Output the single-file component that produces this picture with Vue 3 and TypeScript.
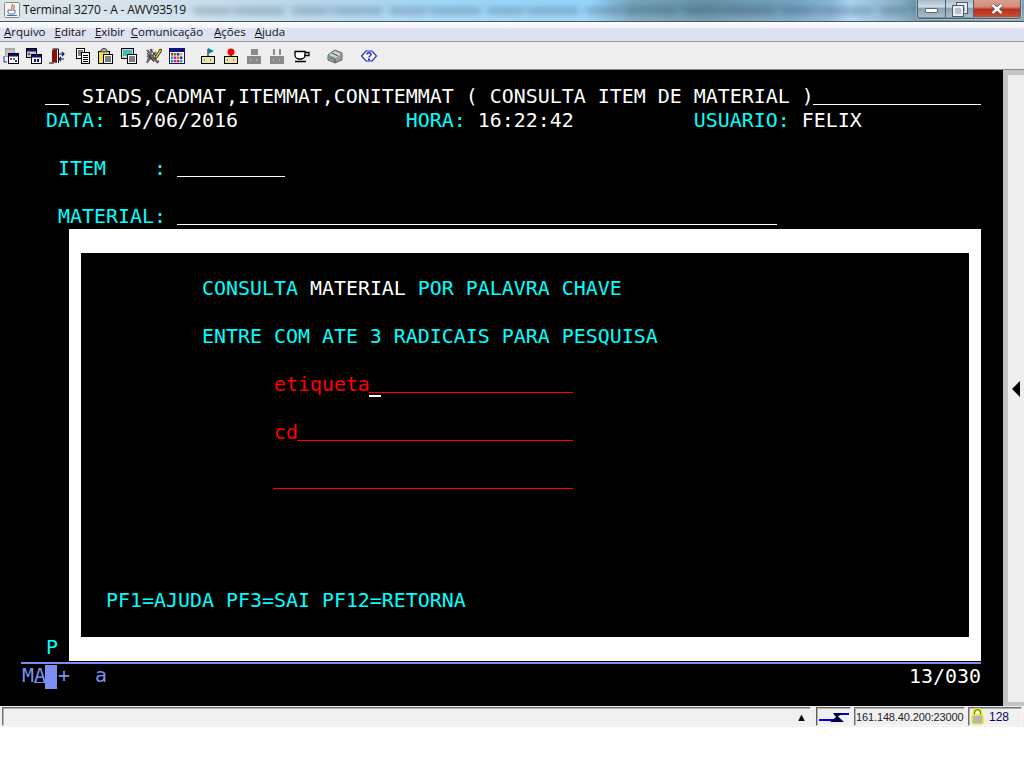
<script setup lang="ts">
interface Seg { t?: string; c: string; f?: number; cursor?: boolean }

const w = (t: string): Seg => ({ t, c: 'white' })
const y = (t: string): Seg => ({ t, c: 'cyan' })
const r = (t: string): Seg => ({ t, c: 'red' })
const f = (n: number, c = 'white', cursor = false): Seg => ({ f: n, c, cursor })

const topRows: Seg[][] = [
  [f(2), w(' SIADS,CADMAT,ITEMMAT,CONITEMMAT ( CONSULTA ITEM DE MATERIAL )'), f(14)],
  [y('DATA: '), w('15/06/2016'), w(' '.repeat(14)), y('HORA: '), w('16:22:42'), w(' '.repeat(10)), y('USUARIO: '), w('FELIX')],
  [],
  [y(' ITEM    : '), f(9)],
  [],
  [y(' MATERIAL: '), f(50)]
]

const popupRows: Seg[][] = [
  [y(' '.repeat(8) + 'CONSULTA '), w('MATERIAL '), y('POR PALAVRA CHAVE')],
  [],
  [y(' '.repeat(8) + 'ENTRE COM ATE 3 RADICAIS PARA PESQUISA')],
  [],
  [r(' '.repeat(14) + 'etiqueta'), f(17, 'red', true)],
  [],
  [r(' '.repeat(14) + 'cd'), f(23, 'red')],
  [],
  [r(' '.repeat(14)), f(25, 'red')],
  [],
  [],
  [],
  [],
  [y('PF1=AJUDA PF3=SAI PF12=RETORNA')]
]

const menu = [
  ['A', 'rquivo'],
  ['E', 'ditar'],
  ['E', 'xibir'],
  ['C', 'omunicação'],
  ['A', 'ções'],
  ['A', 'juda']
]

const calendar = ['#e02020', '#20a020', '#2030d0', '#d0c020', '#20a0a0', '#c020c0', '#e07020', '#2030d0', '#20a020', '#c020c0', '#e02020', '#20a0a0']
</script>

<template>
  <div class="window">
    <header class="title">
      <svg class="app-icon" width="16" height="16" viewBox="0 0 16 16">
        <rect x="0.5" y="0.5" width="15" height="15" rx="1" fill="#f4f4f4" stroke="#8a8a8a" />
        <path d="M8 2c2 2-2 3 0 5M10 3c1 2-1 2 0 4" stroke="#d8661a" stroke-width="1.2" fill="none" />
        <path d="M4 8h7v2c0 2-1 2-2 2H6c-1 0-2 0-2-2z" fill="#fff" stroke="#4a6fa0" />
        <path d="M3 13.5h10" stroke="#4a6fa0" />
      </svg>
      <span class="title-text">Terminal 3270 - A - AWV93519</span>
      <span class="smear"></span>
      <div class="win-buttons">
        <span class="wb min"><i></i></span>
        <span class="wb max"><i></i><b></b></span>
        <span class="wb close">
          <svg width="14" height="12" viewBox="0 0 14 12">
            <path d="M2.5 2l9 8M11.5 2l-9 8" stroke="#4a4a4a" stroke-width="4" />
            <path d="M2.5 2l9 8M11.5 2l-9 8" stroke="#fff" stroke-width="2.4" />
          </svg>
        </span>
      </div>
    </header>

    <nav class="menu">
      <span v-for="m in menu" :key="m[1]" class="menu-item"><u>{{ m[0] }}</u>{{ m[1] }}</span>
    </nav>

    <div class="toolbar">
      <svg viewBox="0 0 16 16">
        <rect x="2" y="0" width="10" height="9" fill="#a8a8a8" /><rect x="3" y="2" width="8" height="6" fill="#c4c4c4" />
        <path d="M1 8v6h3" stroke="#1a2fb0" fill="none" />
        <rect x="5.5" y="5.5" width="10" height="10" fill="#fff" stroke="#000" /><rect x="6" y="6" width="9" height="2.5" fill="#10107a" />
        <rect x="7" y="10" width="2" height="2" fill="#e02020" /><rect x="10" y="10" width="2" height="2" fill="#20a020" /><rect x="12" y="12" width="2" height="2" fill="#2030d0" />
      </svg>
      <svg viewBox="0 0 16 16">
        <rect x="0.5" y="0.5" width="10" height="9" fill="#c8c8c8" stroke="#000" /><rect x="1" y="1" width="9" height="2.5" fill="#10107a" />
        <rect x="5.5" y="6.5" width="10" height="9" fill="#fff" stroke="#000" /><rect x="6" y="7" width="9" height="2.5" fill="#10107a" />
        <rect x="2" y="5" width="2" height="2" fill="#555" /><rect x="8" y="11" width="2" height="3" fill="#10107a" /><rect x="11" y="11" width="2" height="3" fill="#10107a" />
      </svg>
      <svg viewBox="0 0 16 16">
        <path d="M0 15h5M3.500 1h6v14" stroke="#000" fill="none" />
        <path d="M3 2l5-1v14l-5-1z" fill="#8a1010" />
        <path d="M10 6h5M13 4l2 2-2 2M15 11h-5M12 9l-2 2 2 2" stroke="#10107a" stroke-width="1.200" fill="none" />
      </svg>
      <svg class="g3" viewBox="0 0 16 16">
        <rect x="1.500" y="0.500" width="8" height="10" fill="#fff" stroke="#000" /><rect x="6.500" y="4.500" width="8" height="11" fill="#fff" stroke="#000" />
        <path d="M3 3h5M3 5h3M3 7h3M8 7.500h5M8 9.500h5M8 11.500h5M8 13.500h5" stroke="#000" />
      </svg>
      <svg viewBox="0 0 16 16">
        <rect x="0.500" y="3.500" width="11" height="12" fill="#f4e24a" stroke="#000" />
        <path d="M3 4V2l2-1.500h2L9 2v2z" fill="#a8a8a8" stroke="#444" />
        <rect x="5.500" y="6.500" width="9" height="9" fill="#fff" stroke="#000" />
        <path d="M7 9h6M7 11h6M7 13h6" stroke="#000" />
      </svg>
      <svg viewBox="0 0 16 16">
        <rect x="0.500" y="0.500" width="12" height="10" fill="#d4d4d4" stroke="#000" /><rect x="2" y="2" width="9" height="6" fill="#38c0c0" />
        <rect x="6.500" y="6.500" width="9" height="9" fill="#fff" stroke="#000" />
        <path d="M8 9h6M8 11h6M8 13h6" stroke="#000" />
      </svg>
      <svg class="g2" viewBox="0 0 16 16">
        <path d="M1 2l11 13M6 1L1 15M1 8l12 6M2 13l8-9" stroke="#666" stroke-width="2" />
        <path d="M1 5l7 9M4 1l6 7" stroke="#222" />
        <path d="M9 9l5-8 2 1-5 8-2 1z" fill="#f0d820" stroke="#000" stroke-width="0.800" />
      </svg>
      <svg viewBox="0 0 16 16">
        <rect x="0.500" y="0.500" width="15" height="15" fill="#fff" stroke="#10107a" /><rect x="1" y="1" width="14" height="3" fill="#10107a" />
        <rect v-for="(c, i) in calendar" :key="i" :x="2 + (i % 4) * 3" :y="5 + Math.floor(i / 4) * 3.400" width="2.400" height="2.600" :fill="c" />
      </svg>
      <svg class="g8" viewBox="0 0 16 16">
        <rect x="1.500" y="8.500" width="13" height="7" fill="#e8e4a8" stroke="#000" />
        <path d="M8 8V1" stroke="#000" /><path d="M8 0l6 3-6 3z" fill="#108080" />
        <path d="M4 12h2M10 12h2" stroke="#444" stroke-dasharray="1 1" />
      </svg>
      <svg viewBox="0 0 16 16">
        <rect x="1.500" y="8.500" width="13" height="7" fill="#e8e4a8" stroke="#000" />
        <circle cx="8" cy="4" r="3.500" fill="#f00000" /><path d="M8 7v2" stroke="#000" />
        <path d="M4 12h2M10 12h2" stroke="#444" stroke-dasharray="1 1" />
      </svg>
      <svg viewBox="0 0 16 16">
        <rect x="1" y="8" width="14" height="8" fill="#8a8a8a" /><rect x="5" y="1" width="7" height="6" fill="#8a8a8a" />
        <path d="M4 12h2M10 12h2" stroke="#e8e8e8" stroke-dasharray="1 1" />
      </svg>
      <svg viewBox="0 0 16 16">
        <rect x="1" y="8" width="14" height="8" fill="#8a8a8a" /><rect x="4" y="1" width="2" height="6" fill="#8a8a8a" /><rect x="10" y="1" width="2" height="6" fill="#8a8a8a" />
        <path d="M4 12h2M10 12h2" stroke="#e8e8e8" stroke-dasharray="1 1" />
      </svg>
      <svg class="g2" viewBox="0 0 16 16">
        <path d="M1 3.500h10v3c0 3-2 4.500-3.500 4.500H5C3 11 1 9.500 1 6.500z" fill="#fff" stroke="#000" stroke-width="1.300" />
        <path d="M11 4.500h4v3h-5" fill="none" stroke="#000" stroke-width="1.300" />
        <path d="M1 13.500h11" stroke="#000" stroke-width="1.500" />
      </svg>
      <svg class="g10" viewBox="0 0 16 16">
        <path d="M1 7l7-5 7 3v7l-7 3-7-3z" fill="#9a9a9a" stroke="#6a6a6a" />
        <path d="M2 7l7 3 5-4-6-3z" fill="#d4d4d4" />
        <path d="M3 9l5 2.500v3M5 5l6 3" stroke="#444" fill="none" />
        <rect x="3" y="9" width="4" height="2" fill="#38a0a0" />
      </svg>
      <svg class="g11" viewBox="0 0 16 16">
        <path d="M0.500 8L5 3h6l4.500 5L11 13H5z" fill="#fff" stroke="#2020e0" stroke-width="1.200" />
        <path d="M6 6.500C6 4 10 4 10 6.500 10 8 8 8 8 9.500" fill="none" stroke="#2020e0" stroke-width="1.500" />
        <rect x="7" y="10.500" width="2" height="1.800" fill="#2020e0" />
      </svg>
    </div>

    <main class="workarea">
      <section class="terminal">
        <div v-for="(row, i) in topRows" :key="'t' + i" class="row">
          <template v-for="(s, j) in row" :key="j">
            <span v-if="s.f" class="fld" :class="[s.c]" :style="{ width: s.f * 12 + 'px' }"></span>
            <span v-else :class="s.c">{{ s.t }}</span>
          </template>
        </div>
        <div class="row p-row"><span class="cyan">P</span></div>
        <div class="sep"></div>
        <div class="oia">
          <span class="oia-left">M<span class="oia-a">A</span><span class="block"></span>+<span class="oia-gap">a</span></span>
          <span class="white count">13/030</span>
        </div>

        <div class="popup">
          <div class="popup-inner">
            <div v-for="(row, i) in popupRows" :key="'p' + i" class="row">
              <template v-for="(s, j) in row" :key="j">
                <span v-if="s.f" class="fld" :class="[s.c]" :style="{ width: s.f * 12 + 'px' }"><i v-if="s.cursor" class="cursor"></i></span>
                <span v-else :class="s.c">{{ s.t }}</span>
              </template>
            </div>
          </div>
        </div>
      </section>
      <aside class="side"><span class="arrow"></span></aside>
    </main>

    <footer class="status">
      <div class="sunken grow"><span class="up">▲</span></div>
      <div class="sunken link">
        <svg width="30" height="12" viewBox="0 0 30 12">
          <path d="M0 9h15M15 3h15" stroke="#0000e0" stroke-width="2.200" />
          <path d="M14 2h10l-5 3.500 6 5.500H11l6-5z" fill="#000050" />
        </svg>
      </div>
      <div class="sunken addr">161.148.40.200:23000</div>
      <div class="sunken lock">
        <svg width="13" height="17" viewBox="0 0 13 17">
          <path d="M3 7V4.500a3.500 3.500 0 0 1 7 0V7" fill="none" stroke="#ecec20" stroke-width="3" />
          <path d="M3.500 7V4.500a3 3 0 0 1 6 0V7" fill="none" stroke="#555" />
          <rect x="1" y="7" width="11" height="9" rx="2" fill="#b4b4b4" stroke="#ecec20" stroke-width="1.500" />
        </svg>
        <span class="lock-num">128</span>
      </div>
    </footer>
  </div>
</template>

<style scoped>
.window {
  width: 1024px;
  height: 768px;
  overflow: hidden;
  background: #fff;
  display: flex;
  flex-direction: column;
}
.title {
  height: 22px;
  box-sizing: border-box;
  display: flex;
  align-items: flex-start;
  border-bottom: 1px solid #46555e;
  position: relative;
  background:
    linear-gradient(180deg, rgba(255, 255, 255, 0.08), rgba(255, 255, 255, 0) 40%, rgba(255, 255, 255, 0.2)),
    linear-gradient(90deg, #dbe4e8 0, #d4e2ea 130px, #b4d4e8 300px, #98d2f5 450px, #8ed0f8 590px, #6e9eb4 630px, #5c8aa0 700px, #6a9ab8 790px, #7fb0d2 830px, #a4cfee 850px, #7fa8c2 900px, #4f7d90 925px, #7d9cb0 1024px);
}
.app-icon {
  margin: 2px 0 0 4px;
  flex: none;
}
.title-text {
  margin: 2px 0 0 3px;
  font: 12px/16px "Open Sans", "Liberation Sans", sans-serif;
  letter-spacing: -0.18px;
  color: #111;
  white-space: nowrap;
}
.smear {
  flex: 1;
  height: 6px;
  margin: 8px 12px 0 8px;
  opacity: 0.34;
  filter: blur(3px);
  background: repeating-linear-gradient(90deg, #44586a 0 34px, rgba(68, 88, 106, 0.55) 34px 41px, #44586a 41px 90px, transparent 90px 98px);
}
.win-buttons {
  flex: none;
  display: flex;
  height: 18px;
  margin-right: 3px;
  border: 1px solid #50606a;
  border-top: 0;
  border-radius: 0 0 4px 4px;
  overflow: hidden;
  box-shadow: 0 0 0 1px rgba(255, 255, 255, 0.35);
}
.wb {
  height: 17px;
  display: flex;
  align-items: center;
  justify-content: center;
  position: relative;
}
.min,
.max {
  width: 27px;
  background: linear-gradient(180deg, #a8bcc8 0, #cfdce4 40%, #8aa2b2 50%, #a8bcc8 100%);
  border-right: 1px solid #50606a;
}
.min i {
  width: 11px;
  height: 3px;
  margin-top: 4px;
  background: #fff;
  border: 1px solid #5a6a74;
  border-radius: 1px;
}
.max i,
.max b {
  display: block;
  position: absolute;
  border: 2px solid #e8eef2;
  outline: 1px solid #4c5c66;
}
.max i {
  width: 6px;
  height: 6px;
  left: 11px;
  top: 3px;
}
.max b {
  width: 6px;
  height: 6px;
  left: 7px;
  top: 6px;
  background: #b0c4d0;
}
.close {
  width: 46px;
  background: linear-gradient(180deg, #d8a090 0, #d88a78 40%, #b83020 55%, #c85030 100%);
}

.menu {
  height: 20px;
  box-sizing: border-box;
  display: flex;
  padding: 1px 0 0 4px;
  border-bottom: 1px solid #999;
  background: linear-gradient(180deg, #fdfdfe 0, #f2f4fb 30%, #dee2f1 35%, #dde1f0 100%);
  font: 11.500px/18px "Open Sans", "Liberation Sans", sans-serif;
  letter-spacing: -0.02px;
  color: #111;
}
.menu-item {
  margin-right: 9px;
  white-space: nowrap;
}
.menu-item:nth-child(3) {
  margin-right: 6px;
}
.menu-item:nth-child(4) {
  margin-right: 11px;
}
.toolbar {
  height: 28px;
  box-sizing: border-box;
  display: flex;
  align-items: flex-start;
  gap: 7px;
  padding: 6px 0 0 3px;
  background: #eeeeee;
  border-bottom: 1px solid #8a8a8a;
}
.toolbar svg {
  width: 16px;
  height: 16px;
  flex: none;
}
.g2 {
  margin-left: 2px;
}
.g3 {
  margin-left: 3px;
}
.g8 {
  margin-left: 8px;
}
.g10 {
  margin-left: 10px;
}
.g11 {
  margin-left: 11px;
}

.workarea {
  height: 636px;
  display: flex;
}
.terminal {
  width: 1003px;
  height: 100%;
  background: #000;
  position: relative;
  box-sizing: border-box;
  padding-top: 15px;
  font-family: "DejaVu Sans Mono", "Liberation Mono", monospace;
  font-size: 19.930px;
}
.row {
  height: 24px;
  line-height: 24px;
  padding-left: 46px;
  white-space: pre;
}
.white {
  color: #fff;
}
.cyan {
  color: #00ffff;
}
.red {
  color: #ff0000;
}
.fld {
  display: inline-block;
  height: 0;
  border-bottom: 1px solid currentColor;
  vertical-align: -2px;
  position: relative;
  margin-left: -1px;
  margin-right: 1px;
}
.fld.red {
  border-bottom-color: #ff0000;
}
.cursor {
  position: absolute;
  left: 0;
  top: 3px;
  width: 12px;
  height: 2px;
  background: #fff;
}
.p-row {
  margin-top: 407px;
}
.sep {
  height: 2px;
  margin: 2px 22px 0 21px;
  background: #7b8ff0;
}
.oia {
  display: flex;
  justify-content: space-between;
  height: 24px;
  line-height: 24px;
  margin-top: 1px;
  padding: 0 22px 0 22px;
  white-space: pre;
}
.oia-left {
  color: #7b8ff0;
  display: flex;
  line-height: 22px;
}
.oia-a {
  height: 17px;
  width: 11px;
  border-bottom: 1px solid #7b8ff0;
}
.block {
  width: 12px;
  height: 24px;
  margin-right: 1px;
  background: #7b8ff0;
}
.oia-gap {
  margin-left: 25px;
}
.popup {
  position: absolute;
  left: 69px;
  top: 159px;
  width: 912px;
  height: 432px;
  box-sizing: border-box;
  background: #000;
  border: solid #fff;
  border-width: 24px 12px;
}
.popup-inner {
  padding-top: 24px;
}
.popup-inner .row {
  padding-left: 25px;
}
.side {
  flex: 1;
  box-sizing: border-box;
  display: flex;
  align-items: center;
  background: #eeeeee;
  border: solid #c4c4c4;
  border-width: 5px 0 4px 5px;
}
.arrow {
  margin: 0 0 0 4px;
  border-style: solid;
  border-width: 8px 8px 8px 0;
  border-color: transparent #000 transparent transparent;
}

.status {
  height: 21px;
  box-sizing: border-box;
  display: flex;
  gap: 3px;
  padding: 1px 2px 1px 2px;
  background: #f0f0f0;
  font: 11px/16px "Liberation Sans", Arial, sans-serif;
}
.sunken {
  box-sizing: border-box;
  height: 19px;
  border: 1px solid;
  border-color: #707070 #f8f8f8 #f8f8f8 #707070;
  box-shadow: inset 1px 1px 0 #b0b0b0;
  display: flex;
  align-items: center;
}
.grow {
  flex: 1;
  justify-content: flex-end;
  margin-right: 2px;
}
.up {
  font-size: 11px;
  margin-right: 3px;
  color: #000;
}
.link {
  width: 35px;
  justify-content: center;
  border-color: #606060 #f8f8f8 #f8f8f8 #606060;
}
.addr {
  width: 111px;
  padding-left: 1px;
  letter-spacing: -0.13px;
  color: #222;
  white-space: nowrap;
}
.lock {
  width: 54px;
  padding-left: 2px;
}
.lock-num {
  margin-left: 5px;
  font-size: 12px;
  color: #000070;
}
</style>

<style>
html,
body {
  margin: 0;
  background: #fff;
}
</style>
